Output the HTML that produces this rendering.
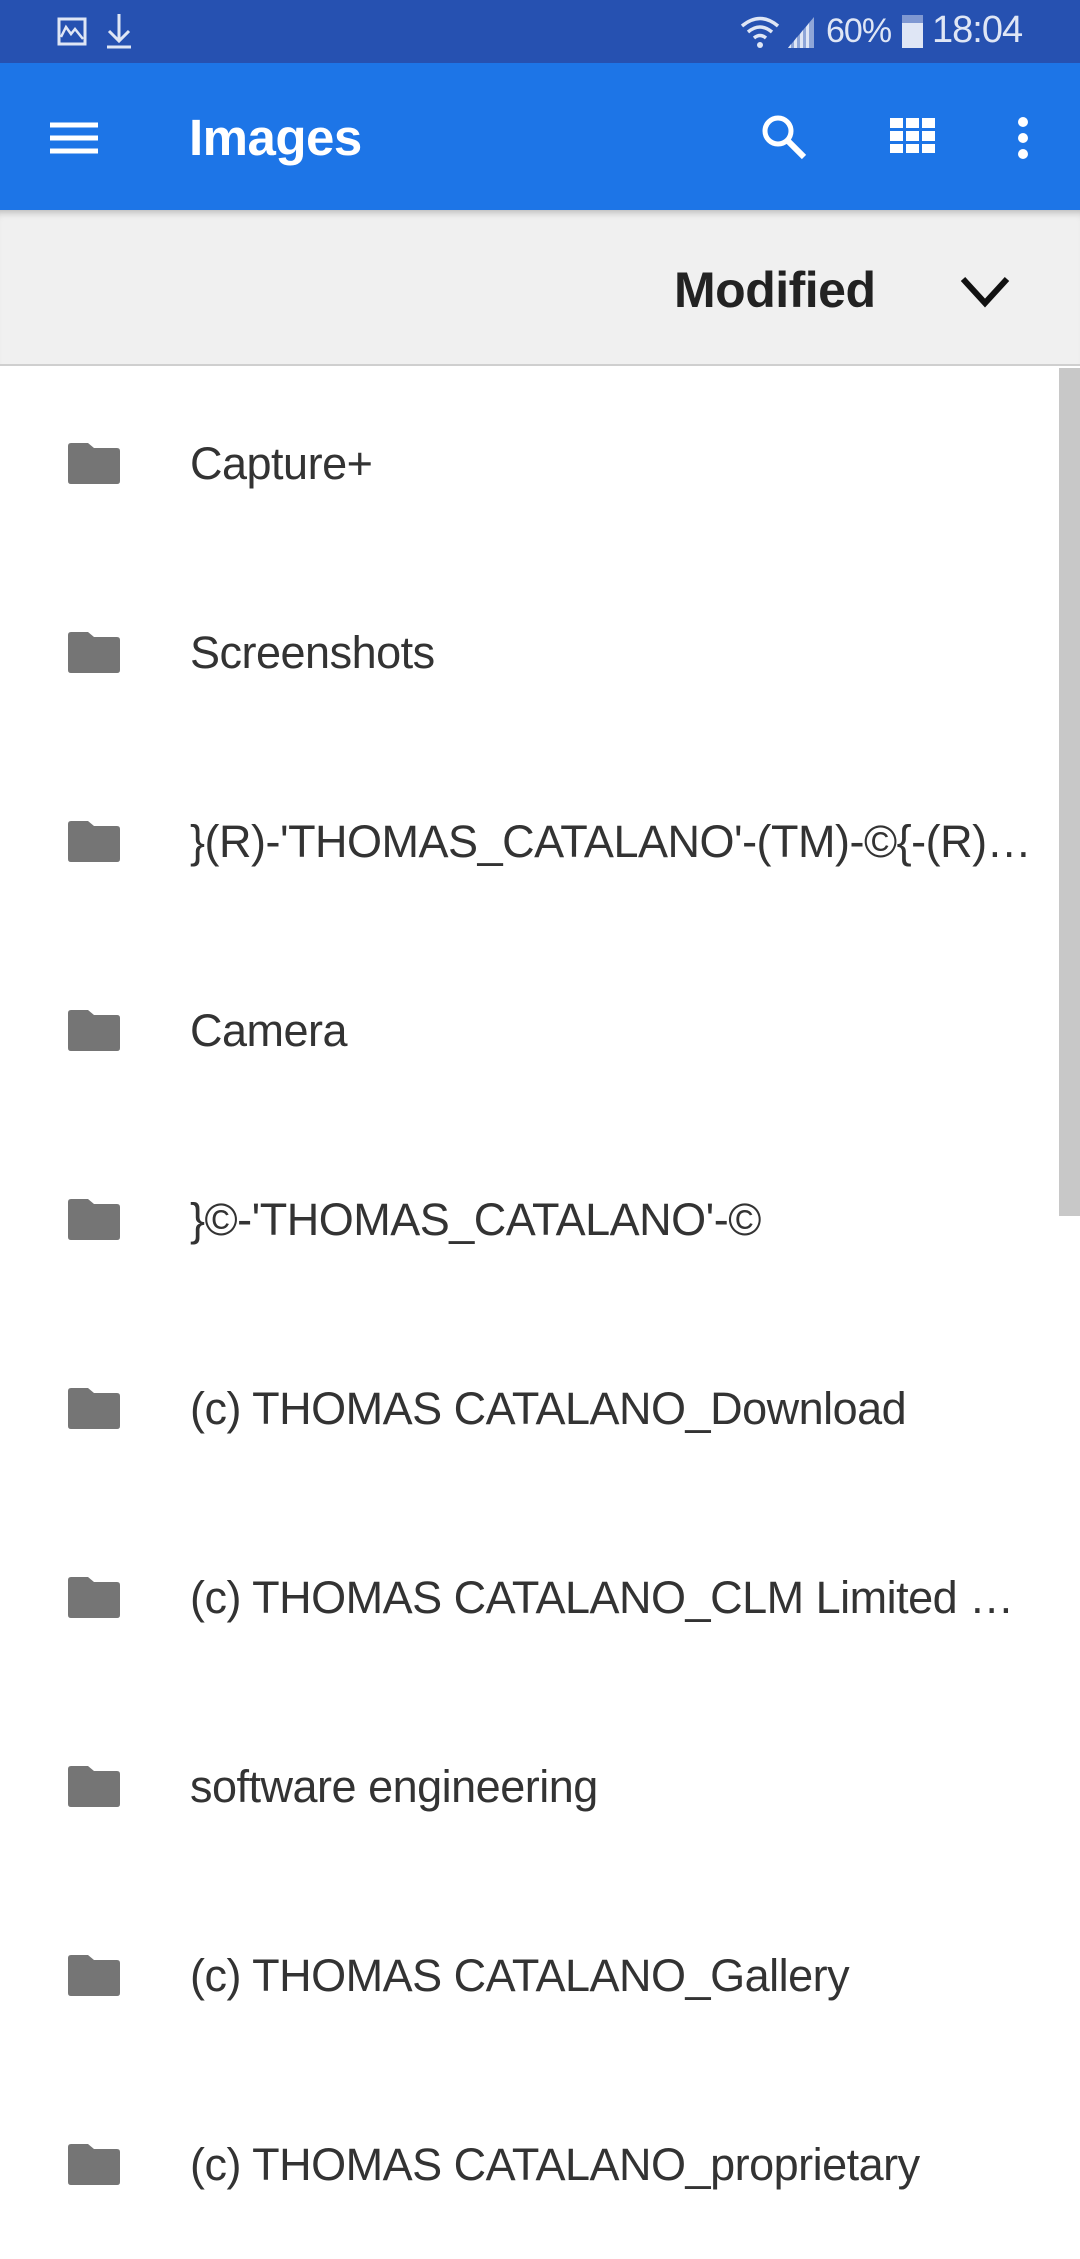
<!DOCTYPE html>
<html><head><meta charset="utf-8"><style>
*{margin:0;padding:0;box-sizing:border-box}
body{width:1080px;height:2160px;overflow:hidden;background:#fff;font-family:"Liberation Sans",sans-serif;position:relative}
.sb{position:absolute;left:0;top:0;width:1080px;height:63px;background:#2651b1;color:#dfe6f5}
.ab{position:absolute;left:0;top:63px;width:1080px;height:147px;background:#1d75e7;color:#fff}
.sort{position:absolute;left:0;top:210px;width:1080px;height:156px;background:#f0f0f0;border-bottom:2px solid #cfcfcf;box-shadow:inset 0 8px 8px -6px rgba(0,0,0,.25)}
.row{position:absolute;left:0;width:1080px;height:189px}
.row svg{position:absolute;left:67px;top:72px}
.row span{position:absolute;left:190px;top:0;width:845px;line-height:189px;font-size:45px;color:#333;white-space:nowrap;overflow:hidden;text-overflow:ellipsis;letter-spacing:-0.5px}
.scroll{position:absolute;left:1059px;top:368px;width:21px;height:848px;background:#c8c8c8}
</style></head><body>
<div class="sb">
<svg style="position:absolute;left:57px;top:17px" width="30" height="29" viewBox="0 0 30 29"><rect x="2" y="2" width="26" height="25" fill="none" stroke="#dfe6f5" stroke-width="3"/><path d="M4 20 L9 10 L14 17 L18 12 L26 22" fill="none" stroke="#dfe6f5" stroke-width="2.5"/></svg>
<svg style="position:absolute;left:105px;top:14px" width="28" height="36" viewBox="0 0 28 36"><path d="M14 0 V26 M4 17 L14 27 L24 17 M2 33 H26" fill="none" stroke="#dfe6f5" stroke-width="3"/></svg>
<svg style="position:absolute;left:740px;top:15px" width="40" height="34" viewBox="0 0 40 34"><path d="M2 11 Q20 -4 38 11 M8 17 Q20 7 32 17 M14 23 Q20 18 26 23" fill="none" stroke="#dfe6f5" stroke-width="3.5"/><circle cx="20" cy="30" r="3" fill="#dfe6f5"/></svg>
<svg style="position:absolute;left:786px;top:15px" width="30" height="34" viewBox="0 0 30 34"><path d="M2 33 L28 2 V33 Z" fill="#8fa6d8"/><path d="M2 33 L5 29 V33Z M8 33 V26 L11 22 V33Z M14 33 V19 L17 15 V33Z M20 33 V12 L23 8 V33Z" fill="#dfe6f5"/></svg>
<div style="position:absolute;left:826px;top:12px;font-size:34px;letter-spacing:-1px">60%</div>
<div style="position:absolute;left:902px;top:15px;width:21px;height:33px;background:#dfe6f5;border-top:8px solid #7f98d2"></div>
<div style="position:absolute;left:932px;top:9px;font-size:38px;letter-spacing:-1px">18:04</div>
</div>
<div class="ab">
<svg style="position:absolute;left:50px;top:59px" width="48" height="32" viewBox="0 0 48 32"><path d="M0 3H48M0 16H48M0 29H48" stroke="#fff" stroke-width="5"/></svg>
<div style="position:absolute;left:189px;top:45px;font-size:51px;line-height:60px;font-weight:bold;letter-spacing:-0.5px">Images</div>
<svg style="position:absolute;left:760px;top:50px" width="48" height="48" viewBox="0 0 48 48"><circle cx="18" cy="18" r="13" fill="none" stroke="#fff" stroke-width="5"/><path d="M27 27 L44 44" stroke="#fff" stroke-width="6"/></svg>
<svg style="position:absolute;left:890px;top:55px" width="45" height="35" viewBox="0 0 45 35"><g fill="#fff"><rect x="0" y="0" width="13" height="10"/><rect x="16" y="0" width="13" height="10"/><rect x="32" y="0" width="13" height="10"/><rect x="0" y="13" width="13" height="10"/><rect x="16" y="13" width="13" height="10"/><rect x="32" y="13" width="13" height="10"/><rect x="0" y="26" width="13" height="9"/><rect x="16" y="26" width="13" height="9"/><rect x="32" y="26" width="13" height="9"/></g></svg>
<svg style="position:absolute;left:1015px;top:53px" width="16" height="44" viewBox="0 0 16 44"><circle cx="8" cy="6" r="5" fill="#fff"/><circle cx="8" cy="22" r="5" fill="#fff"/><circle cx="8" cy="38" r="5" fill="#fff"/></svg>
</div>
<div class="sort">
<div style="position:absolute;left:674px;top:50px;font-size:50px;font-weight:bold;color:#222;line-height:60px;letter-spacing:-0.5px">Modified</div>
<svg style="position:absolute;left:960px;top:66px" width="50" height="32" viewBox="0 0 50 32"><path d="M3 3 L25 27 L47 3" fill="none" stroke="#111" stroke-width="6"/></svg>
</div>
<div class="scroll"></div>
<div class="row" style="top:369px"><svg width="54" height="44" viewBox="0 0 54 44"><path d="M4 2 H21 L27 7 H50 Q53 7 53 10 V40 Q53 43 50 43 H4 Q1 43 1 40 V5 Q1 2 4 2Z" fill="#757575"/></svg><span>Capture+</span></div>
<div class="row" style="top:558px"><svg width="54" height="44" viewBox="0 0 54 44"><path d="M4 2 H21 L27 7 H50 Q53 7 53 10 V40 Q53 43 50 43 H4 Q1 43 1 40 V5 Q1 2 4 2Z" fill="#757575"/></svg><span>Screenshots</span></div>
<div class="row" style="top:747px"><svg width="54" height="44" viewBox="0 0 54 44"><path d="M4 2 H21 L27 7 H50 Q53 7 53 10 V40 Q53 43 50 43 H4 Q1 43 1 40 V5 Q1 2 4 2Z" fill="#757575"/></svg><span>}(R)-'THOMAS_CATALANO'-(TM)-©{-(R)-(TM)</span></div>
<div class="row" style="top:936px"><svg width="54" height="44" viewBox="0 0 54 44"><path d="M4 2 H21 L27 7 H50 Q53 7 53 10 V40 Q53 43 50 43 H4 Q1 43 1 40 V5 Q1 2 4 2Z" fill="#757575"/></svg><span>Camera</span></div>
<div class="row" style="top:1125px"><svg width="54" height="44" viewBox="0 0 54 44"><path d="M4 2 H21 L27 7 H50 Q53 7 53 10 V40 Q53 43 50 43 H4 Q1 43 1 40 V5 Q1 2 4 2Z" fill="#757575"/></svg><span>}©-'THOMAS_CATALANO'-©</span></div>
<div class="row" style="top:1314px"><svg width="54" height="44" viewBox="0 0 54 44"><path d="M4 2 H21 L27 7 H50 Q53 7 53 10 V40 Q53 43 50 43 H4 Q1 43 1 40 V5 Q1 2 4 2Z" fill="#757575"/></svg><span>(c) THOMAS CATALANO_Download</span></div>
<div class="row" style="top:1503px"><svg width="54" height="44" viewBox="0 0 54 44"><path d="M4 2 H21 L27 7 H50 Q53 7 53 10 V40 Q53 43 50 43 H4 Q1 43 1 40 V5 Q1 2 4 2Z" fill="#757575"/></svg><span>(c) THOMAS CATALANO_CLM Limited Liability</span></div>
<div class="row" style="top:1692px"><svg width="54" height="44" viewBox="0 0 54 44"><path d="M4 2 H21 L27 7 H50 Q53 7 53 10 V40 Q53 43 50 43 H4 Q1 43 1 40 V5 Q1 2 4 2Z" fill="#757575"/></svg><span>software engineering</span></div>
<div class="row" style="top:1881px"><svg width="54" height="44" viewBox="0 0 54 44"><path d="M4 2 H21 L27 7 H50 Q53 7 53 10 V40 Q53 43 50 43 H4 Q1 43 1 40 V5 Q1 2 4 2Z" fill="#757575"/></svg><span>(c) THOMAS CATALANO_Gallery</span></div>
<div class="row" style="top:2070px"><svg width="54" height="44" viewBox="0 0 54 44"><path d="M4 2 H21 L27 7 H50 Q53 7 53 10 V40 Q53 43 50 43 H4 Q1 43 1 40 V5 Q1 2 4 2Z" fill="#757575"/></svg><span>(c) THOMAS CATALANO_proprietary</span></div>
</body></html>
